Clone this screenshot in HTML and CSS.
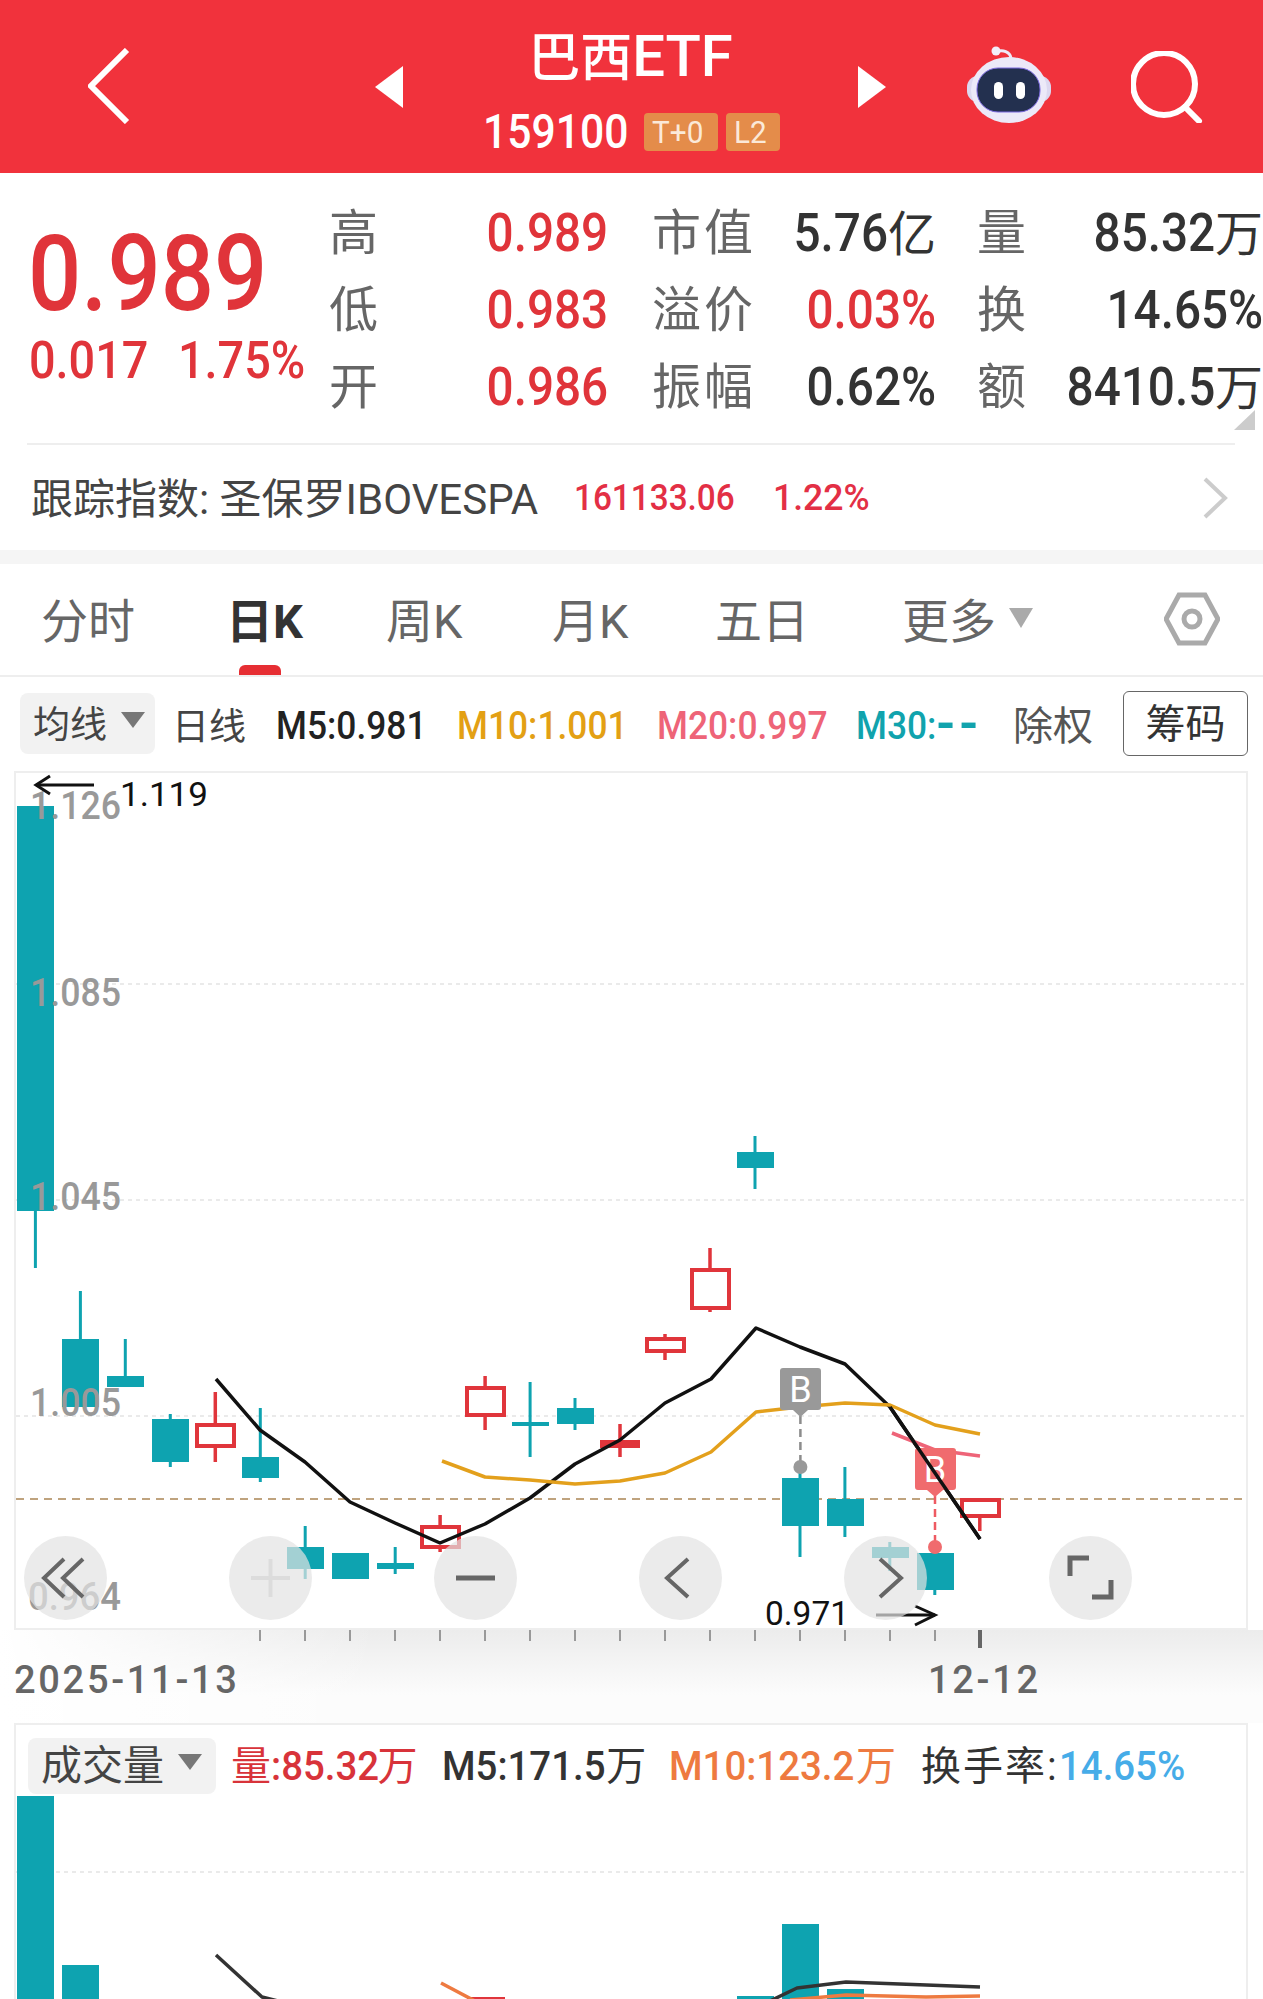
FILE: index.html
```html
<!DOCTYPE html>
<html lang="zh-CN">

<head>
  <meta charset="UTF-8">
  <meta name="viewport" content="width=device-width, initial-scale=1.0">
  <title>巴西ETF 159100</title>
  <link rel="stylesheet" href="styles.css">
</head>

<body>
  <header class="topbar">
    <svg class="back" viewBox="0 0 42 76"><polyline points="39,2 3,38 39,74" /></svg>
    <svg class="tri tri-left" viewBox="0 0 28 42"><polygon points="28,0 28,42 0,21" /></svg>
    <div class="title-block">
      <div class="title">巴西<span class="title-en">ETF</span></div>
      <div class="code-row">
        <span class="code"><span class="num">159100</span></span>
        <span class="badge badge-t"><span class="num">T+0</span></span>
        <span class="badge badge-l"><span class="num">L2</span></span>
      </div>
    </div>
    <svg class="tri tri-right" viewBox="0 0 28 42"><polygon points="0,0 0,42 28,21" /></svg>
    <svg class="robot" viewBox="0 0 84 78">
      <path d="M29 6 C36 3 43 6 44 12" fill="none" stroke="#eee9f8" stroke-width="3" />
      <circle cx="29" cy="5" r="4.5" fill="#f3effa" />
      <rect x="0" y="30" width="84" height="26" rx="11" fill="#dcd8f0" />
      <ellipse cx="42" cy="44" rx="38" ry="33" fill="#ecE9f8" />
      <rect x="10" y="22" width="63" height="44" rx="21" fill="#23304f" stroke="#7d6be0" stroke-width="1" />
      <rect x="27" y="36" width="9" height="17" rx="4.5" fill="#fff" />
      <rect x="49" y="36" width="9" height="17" rx="4.5" fill="#fff" />
    </svg>
    <svg class="search" viewBox="0 0 72 72"><circle cx="33" cy="33" r="31" /><line x1="54" y1="56" x2="68" y2="70" /></svg>
  </header>

  <section class="quote">
    <div class="price-block">
      <div class="price"><span class="num">0.989</span></div>
      <div class="price-sub">
        <span class="sub-cell"><span class="num">0.017</span></span>
        <span class="sub-cell"><span class="num">1.75%</span></span>
      </div>
    </div>
    <div class="stats">
      <span class="lab">高</span><span class="val red"><span class="num">0.989</span></span>
      <span class="lab">市值</span><span class="val"><span class="num">5.76</span>亿</span>
      <span class="lab">量</span><span class="val"><span class="num">85.32</span>万</span>

      <span class="lab">低</span><span class="val red"><span class="num">0.983</span></span>
      <span class="lab">溢价</span><span class="val red"><span class="num">0.03%</span></span>
      <span class="lab">换</span><span class="val"><span class="num">14.65%</span></span>

      <span class="lab">开</span><span class="val red"><span class="num">0.986</span></span>
      <span class="lab">振幅</span><span class="val"><span class="num">0.62%</span></span>
      <span class="lab">额</span><span class="val"><span class="num">8410.5</span>万</span>
    </div>
    <span class="corner"></span>
  </section>

  <section class="track">
    <span class="track-name">跟踪指数: 圣保罗IBOVESPA</span>
    <span class="track-val"><span class="num">161133.06</span></span>
    <span class="track-pct"><span class="num">1.22%</span></span>
    <svg class="track-go" viewBox="0 0 26 42"><polyline points="3,2 23,21 3,40" /></svg>
  </section>

  <nav class="tabs">
    <span class="tab tab-1">分时</span>
    <span class="tab tab-2 active">日K</span>
    <span class="tab tab-3">周K</span>
    <span class="tab tab-4">月K</span>
    <span class="tab tab-5">五日</span>
    <span class="tab tab-6">更多<i class="caret"></i></span>
    <svg class="hex" viewBox="0 0 56 54"><polygon points="15,3 41,3 54,27 41,51 15,51 2,27" /><circle cx="28" cy="27" r="8" /></svg>
  </nav>

  <div class="ind-row">
    <span class="pill pill-ma">均线<i class="caret caret-dark"></i></span>
    <span class="ind ind-day">日线</span>
    <span class="ind ind-m ind-m5"><span class="num">M5:0.981</span></span>
    <span class="ind ind-m ind-m10"><span class="num">M10:1.001</span></span>
    <span class="ind ind-m ind-m20"><span class="num">M20:0.997</span></span>
    <span class="ind ind-m ind-m30"><span class="num">M30:<span class="dash">--</span></span></span>
    <span class="ind ind-ex">除权</span>
    <span class="chip-btn">筹码</span>
  </div>

  <div class="chart">
    <svg class="kline" viewBox="16 773 1230 855">
      <!-- grid -->
      <line class="grid" x1="16" y1="984" x2="1246" y2="984" />
      <line class="grid" x1="16" y1="1200" x2="1246" y2="1200" />
      <line class="grid" x1="16" y1="1416" x2="1246" y2="1416" />
      <line class="last-close" x1="16" y1="1499" x2="1246" y2="1499" />

      <!-- candles, falling -->
      <line class="wick-t" x1="35.4" y1="1210" x2="35.4" y2="1268" />
      <rect class="fall" x="17" y="806" width="37" height="405" />
      <line class="wick-t" x1="80.4" y1="1291" x2="80.4" y2="1340" />
      <rect class="fall" x="62" y="1339" width="37" height="68" />
      <line class="wick-t" x1="125.3" y1="1339" x2="125.3" y2="1377" />
      <rect class="fall" x="107" y="1376" width="37" height="11" />
      <line class="wick-t" x1="170.3" y1="1414" x2="170.3" y2="1467" />
      <rect class="fall" x="152" y="1419" width="37" height="43" />
      <line class="wick-t" x1="260.3" y1="1408" x2="260.3" y2="1482" />
      <rect class="fall" x="242" y="1457" width="37" height="21" />
      <line class="wick-t" x1="305.2" y1="1526" x2="305.2" y2="1579" />
      <rect class="fall" x="287" y="1547" width="37" height="22" />
      <rect class="fall" x="332" y="1553" width="37" height="26" />
      <line class="wick-t" x1="395.2" y1="1547" x2="395.2" y2="1574" />
      <rect class="fall" x="377" y="1563" width="37" height="6" />
      <line class="wick-t" x1="530.1" y1="1382" x2="530.1" y2="1457" />
      <rect class="fall" x="512" y="1422" width="37" height="4" />
      <line class="wick-t" x1="575" y1="1398" x2="575" y2="1430" />
      <rect class="fall" x="557" y="1408" width="37" height="16" />
      <line class="wick-t" x1="755" y1="1136" x2="755" y2="1189" />
      <rect class="fall" x="737" y="1152" width="37" height="16" />
      <line class="wick-t" x1="800" y1="1467" x2="800" y2="1557" />
      <rect class="fall" x="782" y="1478" width="37" height="48" />
      <line class="wick-t" x1="844.9" y1="1467" x2="844.9" y2="1537" />
      <rect class="fall" x="827" y="1499" width="37" height="27" />
      <line class="wick-t" x1="889.8" y1="1542" x2="889.8" y2="1571" />
      <rect class="fall" x="872" y="1547" width="37" height="11" />
      <line class="wick-t" x1="934.8" y1="1546" x2="934.8" y2="1595" />
      <rect class="fall" x="917" y="1553" width="37" height="37" />

      <!-- candles, rising -->
      <line class="wick-r" x1="215.3" y1="1392" x2="215.3" y2="1462" />
      <rect class="rise" x="197" y="1425" width="37" height="21" />
      <line class="wick-r" x1="440.1" y1="1515" x2="440.1" y2="1552" />
      <rect class="rise" x="422" y="1527" width="37" height="20" />
      <line class="wick-r" x1="485.1" y1="1376" x2="485.1" y2="1430" />
      <rect class="rise" x="467" y="1388" width="37" height="27" />
      <line class="wick-r" x1="620" y1="1424" x2="620" y2="1457" />
      <rect class="rise-solid" x="600" y="1440" width="40" height="8" />
      <line class="wick-r" x1="665" y1="1334" x2="665" y2="1360" />
      <rect class="rise" x="647" y="1339" width="37" height="12" />
      <line class="wick-r" x1="710" y1="1248" x2="710" y2="1312" />
      <rect class="rise" x="692" y="1270" width="37" height="38" />
      <line class="wick-r" x1="979.8" y1="1516" x2="979.8" y2="1531" />
      <rect class="rise" x="962" y="1500" width="37" height="16" />

      <!-- averages -->
      <polyline class="ma ma5" points="216,1379 260,1430 305,1462 350,1502 395,1523 440,1543 485,1524 530,1498 575,1464 620,1440 665,1403 711,1379 756,1328 800,1347 845,1364 890,1407 935,1473 980,1539" />
      <polyline class="ma ma10" points="442,1461 485,1477 530,1480 575,1484 620,1481 665,1473 711,1452 756,1412 800,1407 845,1403 890,1405 935,1425 980,1434" />
      <polyline class="ma ma20" points="892,1433 935,1450 980,1456" />

      <!-- trade marks -->
      <line class="drop drop-g" x1="800.4" y1="1416" x2="800.4" y2="1461" />
      <circle class="mark-g" cx="800.4" cy="1467" r="7" />
      <path class="mark-g" d="M783 1368 H818 Q821 1368 821 1371 V1407 Q821 1410 818 1410 H808 L800.4 1417 L793 1410 H783 Q780 1410 780 1407 V1371 Q780 1368 783 1368 Z" />
      <text class="mark-txt" x="800.4" y="1402">B</text>
      <line class="drop drop-r" x1="935" y1="1496" x2="935" y2="1541" />
      <circle class="mark-r" cx="935" cy="1547" r="7" />
      <path class="mark-r" d="M918 1448 H953 Q956 1448 956 1451 V1487 Q956 1490 953 1490 H943 L935 1497 L927 1490 H918 Q915 1490 915 1487 V1451 Q915 1448 918 1448 Z" />
      <text class="mark-txt" x="935" y="1482">B</text>
      <polyline class="ma ma5 ma-top" points="890,1407 935,1473 980,1539" />

      <!-- axis labels -->
      <text class="axis" x="30" y="819" textLength="91" lengthAdjust="spacingAndGlyphs">1.126</text>
      <text class="axis" x="30" y="1006" textLength="91" lengthAdjust="spacingAndGlyphs">1.085</text>
      <text class="axis" x="30" y="1210" textLength="91" lengthAdjust="spacingAndGlyphs">1.045</text>
      <text class="axis" x="30" y="1416" textLength="91" lengthAdjust="spacingAndGlyphs">1.005</text>
      <text class="axis" x="28" y="1610" textLength="93" lengthAdjust="spacingAndGlyphs">0.964</text>

      <!-- high / low pointers -->
      <polyline class="pointer" points="94,785 36,785" />
      <polyline class="pointer" points="50,776 36,785 50,794" />
      <text class="extreme" x="120" y="806" textLength="88" lengthAdjust="spacingAndGlyphs">1.119</text>
      <text class="extreme" x="765" y="1625" textLength="84" lengthAdjust="spacingAndGlyphs">0.971</text>
      <polyline class="pointer" points="876,1615 935,1615" />
      <polyline class="pointer" points="915,1606 935,1615 915,1625" />
    </svg>

    <div class="chart-btns">
      <span class="round-btn"><svg viewBox="0 0 83 84"><polyline points="40,23 20,42 40,61" /><polyline points="59,23 39,42 59,61" /></svg></span>
      <span class="round-btn off"><svg viewBox="0 0 83 84"><line x1="22" y1="42" x2="61" y2="42" /><line x1="41.5" y1="23" x2="41.5" y2="61" /></svg></span>
      <span class="round-btn"><svg viewBox="0 0 83 84"><line class="thick" x1="22" y1="42" x2="61" y2="42" /></svg></span>
      <span class="round-btn"><svg viewBox="0 0 83 84"><polyline points="49,23 28,42 49,61" /></svg></span>
      <span class="round-btn"><svg viewBox="0 0 83 84"><polyline points="36,23 57,42 36,61" /></svg></span>
      <span class="round-btn"><svg viewBox="0 0 83 84"><polyline class="thick" points="40,22 21,22 21,40" /><polyline class="thick" points="43,61 62,61 62,44" /></svg></span>
    </div>
  </div>

  <div class="axis-row">
    <svg class="ticks" viewBox="0 0 1263 20">
      <path d="M260 0V11M305 0V11M350 0V11M395 0V11M440 0V11M485 0V11M530 0V11M575 0V11M620 0V11M665 0V11M710 0V11M755 0V11M800 0V11M845 0V11M890 0V11M935 0V11" />
      <path class="tick-end" d="M980 0V18" />
    </svg>
    <div class="dates">
      <span class="date-start">2025-11-13</span>
      <span class="date-end">12-12</span>
    </div>
  </div>

  <section class="vol">
    <div class="vol-head">
      <span class="pill pill-vol">成交量<i class="caret caret-dark"></i></span>
      <span class="vh vh-1 c-red">量<span class="num">:85.32</span>万</span>
      <span class="vh vh-2"><span class="num">M5:171.5</span>万</span>
      <span class="vh vh-3 c-org"><span class="num">M10:123.2</span>万</span>
      <span class="vh vh-4">换手率:<span class="num c-blue">14.65%</span></span>
    </div>
    <svg class="vol-chart" viewBox="16 1796 1230 203">
      <line class="grid" x1="16" y1="1872" x2="1246" y2="1872" />
      <rect class="fall" x="17" y="1796" width="37" height="210" />
      <rect class="fall" x="62" y="1965" width="37" height="40" />
      <rect class="fall" x="737" y="1996" width="37" height="10" />
      <rect class="fall" x="782" y="1924" width="37" height="80" />
      <rect class="fall" x="827" y="1989" width="37" height="20" />
      <rect class="rise-solid" x="467" y="1997" width="38" height="10" />
      <polyline class="ma vol-m5" points="216,1955 262,1997 278,2001" />
      <polyline class="ma vol-m5" points="770,2001 797,1988 846,1982 980,1987" />
      <polyline class="ma vol-m10" points="441,1983 475,2001" />
      <polyline class="ma vol-m10" points="790,2000 846,1995 926,1997 980,1996" />
    </svg>
  </section>
</body>

</html>
```

FILE: styles.css
```css
* {
  box-sizing: border-box;
}

html,
body {
  margin: 0;
  padding: 0;
}

body {
  width: 1263px;
  height: 1999px;
  overflow: hidden;
  background: #fff;
  color: #333;
  font-family: Roboto, "Noto Sans CJK SC", sans-serif;
}

i {
  font-style: normal;
}

/* digits in the app are narrower than Roboto */
.num {
  display: inline-block;
  white-space: nowrap;
  font-weight: 500;
  transform: scaleX(var(--sx, 0.87));
  transform-origin: left center;
}

/* top bar */
.topbar {
  display: flex;
  align-items: center;
  height: 173px;
  background: #f1323c;
  color: #fff;
}

.back {
  width: 42px;
  height: 76px;
  margin-left: 88px;
  margin-top: -2px;
  fill: none;
  stroke: #fff;
  stroke-width: 6;
}

.tri {
  width: 28px;
  height: 42px;
  fill: #fff;
}

.tri-left {
  margin-left: 245px;
}

.title-block {
  display: flex;
  flex-direction: column;
  align-items: center;
  width: 455px;
  height: 173px;
  padding-top: 26px;
}

.title {
  font-size: 52px;
  font-weight: 500;
  line-height: 60px;
  white-space: nowrap;
}

.title-en {
  font-size: 58px;
}

.code-row {
  display: flex;
  align-items: center;
  margin-top: 24px;
  height: 38px;
}

.code {
  width: 161px;
  font-size: 49px;
  line-height: 38px;
  margin-left: 2px;
}

.badge {
  display: block;
  height: 38px;
  font-size: 32px;
  line-height: 38px;
  background: #e48c4a;
  border-radius: 4px;
  color: #fbe9d8;
  padding-left: 8px;
  white-space: nowrap;
  --sx: 0.93;
}

.badge .num {
  font-weight: 400;
}

.badge-t {
  width: 74px;
  margin-right: 8px;
}

.badge-l {
  width: 54px;
}

.robot {
  width: 84px;
  height: 78px;
  margin-left: 81px;
  margin-top: -4px;
}

.search {
  width: 72px;
  height: 72px;
  margin-left: 80px;
  fill: none;
  stroke: #fff;
  stroke-width: 6;
  stroke-linecap: round;
}

/* quote block */
.quote {
  position: relative;
  display: flex;
  height: 272px;
}

.quote::after {
  content: "";
  position: absolute;
  left: 27px;
  right: 28px;
  bottom: 0;
  height: 2px;
  background: #eeeeee;
}

.price-block {
  width: 329px;
  padding: 63px 0 0 28px;
  color: #e0343a;
  --sx: 0.885;
}

.price {
  font-size: 106px;
  line-height: 76px;
  height: 76px;
}

.price-sub {
  display: flex;
  margin-top: 30px;
  margin-left: 1px;
  font-size: 52px;
  line-height: 37px;
  --sx: 0.9;
}

.sub-cell {
  width: 149px;
  white-space: nowrap;
}

.stats {
  display: grid;
  grid-template-columns: 48px 231px 148px 180px 93px 234px;
  grid-auto-rows: 77px;
  align-items: center;
  padding-top: 22px;
}

.lab {
  font-size: 49px;
  line-height: 60px;
  color: #666;
  text-align: right;
  white-space: nowrap;
  letter-spacing: 2px;
}

.stats .lab:nth-child(6n+3),
.stats .lab:nth-child(6n+5) {
  letter-spacing: 3px;
}

.val {
  font-size: 48px;
  line-height: 60px;
  color: #333;
  text-align: right;
  white-space: nowrap;
  --sx: 0.9;
}

.val .num {
  font-size: 53px;
  transform-origin: right center;
}

.val.red {
  color: #e0343a;
}

.corner {
  position: absolute;
  right: 8px;
  bottom: 15px;
  width: 0;
  height: 0;
  border-left: 21px solid transparent;
  border-bottom: 20px solid #cccccc;
}

/* tracking row */
.track {
  display: flex;
  align-items: center;
  height: 105px;
  padding-left: 31px;
}

.track-name {
  width: 543px;
  margin-top: -5px;
  font-size: 42px;
  color: #444;
  white-space: nowrap;
}

.track-val,
.track-pct {
  font-size: 37px;
  color: #e32f45;
  --sx: 0.9;
}

.track-pct .num {
  --sx: 0.96;
}

.track-val {
  width: 199px;
}

.track-pct {
  width: 429px;
}

.track-go {
  width: 26px;
  height: 42px;
  fill: none;
  stroke: #cccccc;
  stroke-width: 4;
}

/* tabs */
.tabs {
  display: flex;
  align-items: center;
  height: 127px;
  border-top: 14px solid #f5f5f5;
  border-bottom: 2px solid #eeeeee;
  padding-left: 41px;
  font-size: 47px;
  color: #666;
}

.tab {
  position: relative;
  display: block;
  white-space: nowrap;
  margin-top: -4px;
}

.tab-1 {
  width: 185px;
}

.tab-2 {
  width: 160px;
}

.tab-3 {
  width: 166px;
}

.tab-4 {
  width: 163px;
}

.tab-5 {
  width: 187px;
}

.tab-6 {
  width: 262px;
}

.active {
  color: #333;
  font-weight: 700;
}

.active::after {
  content: "";
  position: absolute;
  left: 13px;
  top: 82px;
  width: 42px;
  height: 10px;
  border-radius: 6px 6px 0 0;
  background: #e62e33;
}

.caret {
  display: inline-block;
  width: 0;
  height: 0;
  margin-left: 13px;
  vertical-align: 10px;
  border-left: 12px solid transparent;
  border-right: 12px solid transparent;
  border-top: 20px solid #aaaaaa;
}

.caret-dark {
  margin-left: 14px;
  border-top: 16px solid #777;
  vertical-align: 10px;
}

.hex {
  width: 56px;
  height: 54px;
  margin-top: -2px;
  fill: none;
  stroke: #aaaaaa;
  stroke-width: 5;
}

/* indicator row */
.ind-row {
  display: flex;
  align-items: center;
  height: 94px;
  padding-left: 20px;
  padding-bottom: 2px;
}

.pill {
  display: block;
  white-space: nowrap;
  background: #f2f2f2;
  border-radius: 8px;
  color: #444;
}

.pill-ma {
  width: 135px;
  height: 61px;
  margin-right: 17px;
  padding-left: 13px;
  font-size: 37px;
  line-height: 65px;
}

.ind {
  display: block;
  font-size: 38px;
  white-space: nowrap;
  --sx: 0.93;
  color: #222;
}

.ind-m {
  margin-top: 6px;
}

.ind-day {
  width: 104px;
  margin-top: 2px;
  font-size: 37px;
  color: #444;
}

.ind-m5 {
  width: 181px;
}

.ind-m10 {
  width: 200px;
  color: #e3a014;
}

.ind-m20 {
  width: 199px;
  color: #ee6478;
}

.ind-m30 {
  width: 157px;
  color: #11a3ad;
}

.dash {
  font-size: 58px;
  line-height: 0;
  letter-spacing: 5px;
  vertical-align: -4px;
}

.ind-ex {
  width: 110px;
  font-size: 40px;
  color: #555;
}

.chip-btn {
  display: block;
  width: 125px;
  height: 65px;
  border: 1.5px solid #666;
  border-radius: 6px;
  font-size: 40px;
  line-height: 65px;
  text-align: center;
  color: #333;
}

/* k line chart */
.chart {
  position: relative;
  width: 1234px;
  height: 859px;
  margin-left: 14px;
  border: 2px solid #eeeeee;
}

.kline {
  display: block;
  width: 1230px;
  height: 855px;
}

.grid {
  stroke: #e4e4e4;
  stroke-width: 1.5;
  stroke-dasharray: 4 4;
}

.last-close {
  stroke: #bfa37e;
  stroke-width: 2;
  stroke-dasharray: 8 6;
}

.fall {
  fill: #0ea3b0;
}

.wick-t {
  stroke: #0ea3b0;
  stroke-width: 3;
}

.wick-r {
  stroke: #e0353b;
  stroke-width: 3.5;
}

.rise {
  fill: #fff;
  stroke: #e0353b;
  stroke-width: 4;
}

.rise-solid {
  fill: #e0353b;
}

.ma {
  fill: none;
  stroke-width: 3.5;
  stroke-linejoin: round;
}

.ma5 {
  stroke: #111;
}

.ma10 {
  stroke: #e3a01c;
}

.ma20 {
  stroke: #ee6478;
}

.drop {
  stroke-width: 2.5;
  stroke-dasharray: 8 5;
}

.drop-g {
  stroke: #8c8c8c;
}

.drop-r {
  stroke: #ee5a62;
}

.mark-g {
  fill: #999999;
}

.mark-r {
  fill: #f06b6e;
}

.mark-txt {
  fill: #fff;
  font-size: 36px;
  text-anchor: middle;
}

.axis {
  fill: #999999;
  font-size: 38px;
  font-weight: 500;
}

.extreme {
  fill: #111;
  font-size: 33px;
}

.pointer {
  fill: none;
  stroke: #111;
  stroke-width: 3;
}

.chart-btns {
  position: absolute;
  left: 8px;
  top: 763px;
  display: flex;
  gap: 122px;
}

.round-btn {
  display: block;
  width: 83px;
  height: 84px;
  border-radius: 50%;
  background: rgba(226, 226, 226, 0.7);
}

.round-btn svg {
  display: block;
  width: 83px;
  height: 84px;
  fill: none;
  stroke: #666;
  stroke-width: 4;
}

.round-btn.off svg {
  stroke: #dcdcdc;
}

.round-btn .thick {
  stroke-width: 5;
}

/* date axis */
.axis-row {
  height: 93px;
  background:
    linear-gradient(to right, #fff, rgba(255, 255, 255, 0) 30%),
    linear-gradient(#ececec, #fcfcfc 70%);
}

.ticks {
  display: block;
  width: 1263px;
  height: 20px;
  fill: none;
  stroke: #999999;
  stroke-width: 2;
}

.tick-end {
  stroke: #666;
  stroke-width: 4;
}

.dates {
  display: flex;
  padding-left: 14px;
  margin-top: 10px;
  font-size: 38px;
  font-weight: 500;
  line-height: 40px;
  color: #666;
  letter-spacing: 2.7px;
}

.date-start {
  width: 914px;
}

/* volume */
.vol {
  width: 1234px;
  height: 276px;
  margin-left: 14px;
  border: 2px solid #eeeeee;
  border-bottom: 0;
  overflow: hidden;
}

.vol-head {
  display: flex;
  align-items: center;
  height: 71px;
  padding: 11px 0 0 12px;
  font-size: 40px;
  --sx: 0.96;
}

.pill-vol {
  width: 188px;
  height: 56px;
  margin-right: 15px;
  padding-left: 13px;
  font-size: 41px;
  line-height: 57px;
}

.vh {
  display: block;
  margin-top: -6px;
  white-space: nowrap;
}

.vh .num {
  font-size: 40px;
  letter-spacing: 0;
  margin-right: -6px;
}

.vh-1 {
  width: 211px;
}

.vh-2 {
  width: 227px;
}

.vh-3 {
  width: 252px;
}

.vh-4 {
  width: 290px;
  font-size: 40px;
  letter-spacing: 2px;
}

.c-red {
  color: #d8333a;
}

.c-org {
  color: #ee7a40;
}

.c-blue {
  color: #46ace8;
}

.vol-chart {
  display: block;
  width: 1230px;
  height: 203px;
}

.vol-m5 {
  stroke: #333;
}

.vol-m10 {
  stroke: #ee7a40;
}
```
